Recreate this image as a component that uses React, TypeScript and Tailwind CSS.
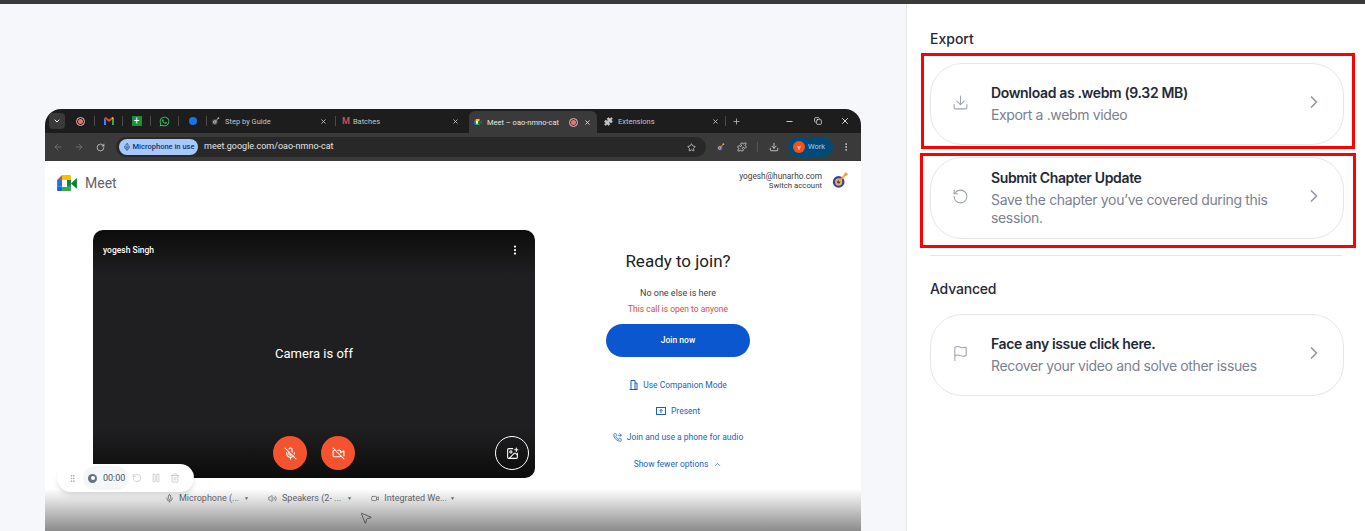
import React from "react";
import {
  ArrowLeft,
  ArrowRight,
  ChevronDown,
  ChevronRight,
  ChevronUp,
  Copy,
  Download,
  EllipsisVertical,
  Flag,
  GripVertical,
  ImagePlus,
  Mic,
  MicOff,
  Minus,
  MousePointer2,
  Pause,
  PhoneForwarded,
  Plus,
  Puzzle,
  RotateCcw,
  RotateCw,
  Star,
  Trash2,
  Video,
  VideoOff,
  Volume2,
  X,
} from "lucide-react";
import { FaWhatsapp } from "react-icons/fa";

function MeetLogo({ size = 20 }: { size?: number }) {
  return (
    <svg width={size} height={size * 0.84} viewBox="0 0 20 17">
      <path d="M0 5 L5 0 V5 Z" fill="#ea4335" />
      <path d="M5 0 H13 Q14 0 14 1 V5 H5 Z" fill="#fbbc04" />
      <path d="M0 5 H5 V12 H0 Z" fill="#1a73e8" />
      <path d="M0 12 H5 V17 H1.5 Q0 17 0 15.5 Z" fill="#1967d2" />
      <path d="M5 12 H14 V16 Q14 17 13 17 H5 Z" fill="#34a853" />
      <path d="M14 5 V12 H10 V5 Z" fill="#188038" />
      <path d="M14 8.5 L20 3 V14 Z" fill="#00832d" />
      <rect x="5" y="5" width="5" height="7" fill="#fff" />
    </svg>
  );
}

function TargetLogo({ size = 18 }: { size?: number }) {
  return (
    <svg width={size} height={size} viewBox="0 0 18 20">
      <circle cx="7.5" cy="11" r="6.5" fill="#3f3d9e" />
      <circle cx="7.5" cy="11" r="4" fill="#e7b54a" />
      <circle cx="7.5" cy="11" r="1.8" fill="#3f3d9e" />
      <path d="M8 10.5 L15 3" stroke="#e9a93c" strokeWidth="2" />
      <circle cx="15.5" cy="2.5" r="2" fill="#e9a93c" />
    </svg>
  );
}

function GmailIcon() {
  return (
    <svg width="10" height="8" viewBox="0 0 10 8">
      <path d="M0 1 V8 H2 V3 Z" fill="#4285f4" />
      <path d="M8 3 V8 H10 V1 Z" fill="#34a853" />
      <path d="M0 1 L5 5 L10 1 L8 0 L5 2.5 L2 0 Z" fill="#ea4335" />
      <path d="M8 0 L10 1 L8 3 Z" fill="#fbbc04" />
    </svg>
  );
}

function CompanionIcon() {
  return (
    <svg width="9" height="10" viewBox="0 0 9 10" fill="none" stroke="currentColor" strokeWidth="1">
      <path d="M2 9.5 V0.5 H6 V9.5" />
      <path d="M6 3 H8 V9.5" />
      <path d="M0.5 9.5 H8.5" />
    </svg>
  );
}

function PresentIcon() {
  return (
    <svg width="10" height="8" viewBox="0 0 10 8" fill="none" stroke="currentColor" strokeWidth="1">
      <rect x="0.5" y="0.5" width="9" height="7" />
      <path d="M5 6 V2.5 M3.5 4 L5 2.5 L6.5 4" />
    </svg>
  );
}

function RecDot() {
  return (
    <span className="flex h-[9px] w-[9px] items-center justify-center rounded-full border border-[#f2b8b5]">
      <span className="h-[5px] w-[5px] rounded-full bg-[#e2766e]" />
    </span>
  );
}

function Sep() {
  return <span className="h-[10px] w-px shrink-0 bg-[#4a4a4a]" />;
}

function PinnedTab({ children }: { children: React.ReactNode }) {
  return (
    <>
      <span className="flex w-[27px] shrink-0 items-center justify-center">{children}</span>
      <Sep />
    </>
  );
}

function BrowserTabs() {
  return (
    <div className="flex h-6 items-center bg-[#1d1d1d] pl-[4px] text-[7.5px] text-[#c4c4c4]">
      <span className="flex h-4 w-4 items-center justify-center rounded bg-[#3a3a3a]">
        <ChevronDown size={8} strokeWidth={3} className="text-white" />
      </span>
      <span className="w-[2px]" />
      <PinnedTab>
        <RecDot />
      </PinnedTab>
      <PinnedTab>
        <GmailIcon />
      </PinnedTab>
      <PinnedTab>
        <span className="flex h-[10px] w-[10px] items-center justify-center bg-[#1e8e3e] text-[10px] leading-none text-white">+</span>
      </PinnedTab>
      <PinnedTab>
        <FaWhatsapp size={11} className="text-[#25d366]" />
      </PinnedTab>
      <PinnedTab>
        <span className="h-2 w-2 rounded-full bg-[#1a73e8]" />
      </PinnedTab>
      <div className="flex w-[128px] items-center pl-[4px]">
        <span className="grayscale">
          <TargetLogo size={9} />
        </span>
        <span className="ml-[5px] flex-1 pt-px">Step by Guide</span>
        <X size={7} strokeWidth={3} className="mr-[8px]" />
      </div>
      <Sep />
      <div className="flex w-[133px] items-center pl-[6px]">
        <span className="text-[9px] font-bold leading-none text-[#d0475a]">M</span>
        <span className="ml-[3px] flex-1 pt-px">Batches</span>
        <X size={7} strokeWidth={3} className="mr-[10px]" />
      </div>
      <div className="flex h-[22px] w-[128px] items-center self-end rounded-t-md bg-[#3a3a3a] pl-[5px] text-[#e4e4e4]">
        <MeetLogo size={8} />
        <span className="ml-[5px] flex-1 pt-px">Meet – oao-nmno-cat</span>
        <RecDot />
        <X size={7} strokeWidth={3} className="ml-[6px] mr-[6px]" />
      </div>
      <div className="flex w-[128px] items-center pl-[7px]">
        <Puzzle size={9} fill="#c4c4c4" />
        <span className="ml-[5px] flex-1 pt-px">Extensions</span>
        <X size={7} strokeWidth={3} className="mr-[6px]" />
      </div>
      <Sep />
      <Plus size={9} className="ml-[6px]" />
      <Minus size={9} className="ml-[44px] text-white" />
      <Copy size={8} className="ml-[20px] text-white" />
      <X size={10} className="ml-[18px] text-white" />
    </div>
  );
}

function BrowserToolbar() {
  return (
    <div className="flex h-7 items-center bg-[#3a3a3a] pl-[8px] text-[#d8d8d8]">
      <ArrowLeft size={10} className="text-[#777]" />
      <ArrowRight size={10} className="ml-[11px] text-[#777]" />
      <RotateCw size={9} className="ml-[12px]" />
      <div className="ml-[11px] flex h-[20px] w-[590px] items-center rounded-full bg-[#282828] pl-[3px] pr-[10px]">
        <span className="flex h-[16px] w-[79px] items-center justify-center gap-[2px] rounded-full bg-[#a8c7fa] text-[7.5px] font-medium text-[#0b3a6e]">
          <Mic size={8} />
          Microphone in use
        </span>
        <span className="ml-[6px] flex-1 text-[9px] text-[#e4e4e4]">meet.google.com/oao-nmno-cat</span>
        <Star size={9} />
      </div>
      <span className="ml-[10px]">
        <TargetLogo size={9} />
      </span>
      <Puzzle size={10} className="ml-[12px]" />
      <span className="ml-[10px] h-[10px] w-px bg-[#555]" />
      <Download size={10} className="ml-[11px]" />
      <span className="ml-[9px] flex h-[20px] w-[45px] items-center rounded-full bg-[#004a77] pl-[5px]">
        <span className="flex h-[12px] w-[12px] items-center justify-center rounded-full bg-[#f4511e] text-[6px] text-white">Y</span>
        <span className="ml-[3px] text-[7.5px] text-[#a8c7fa]">Work</span>
      </span>
      <EllipsisVertical size={10} className="ml-[8px]" />
    </div>
  );
}

function JoinLink({ children }: { children: React.ReactNode }) {
  return (
    <div className="flex h-[26.3px] items-center justify-center gap-[5px] text-[8.5px] text-[#1a5fc8]">
      {children}
    </div>
  );
}

function DeviceItem({ icon, label }: { icon: React.ReactNode; label: string }) {
  return (
    <div className="flex w-[84px] items-center gap-[3px] whitespace-nowrap text-[9px] text-[#5f6368]">
      {icon}
      <span className="ml-[2px] flex-1">{label}</span>
      <span className="text-[5px]">▼</span>
    </div>
  );
}

function MeetPage() {
  return (
    <div className="relative flex-1 overflow-hidden bg-white">
      <div className="flex h-[69px] items-start justify-between pl-[12px] pr-[12px] pt-[10px]">
        <div className="flex items-center gap-[8px] pt-[3px]">
          <MeetLogo size={20} />
          <span className="text-[14px] leading-[18px] text-[#5f6368]">Meet</span>
        </div>
        <div className="flex items-center gap-[9px]">
          <div className="text-right text-[7.8px] leading-[10px] text-[#3c4043]">
            <div className="text-[8.3px]">yogesh@hunarho.com</div>
            <div>Switch account</div>
          </div>
          <TargetLogo size={18} />
        </div>
      </div>

      <div className="flex pl-[48px] pr-[40px]">
        <div className="flex h-[248px] w-[442px] flex-col justify-between rounded-[10px] bg-[linear-gradient(#0c0c0c_0%,#1f1f21_18%,#1f1f21_80%,#0c0c0c_100%)] px-[10px] pb-[8px] pt-[14px] text-white">
          <div className="flex items-center justify-between text-[8.5px] font-medium">
            <span>yogesh Singh</span>
            <EllipsisVertical size={12} strokeWidth={2.5} className="mr-[4px]" />
          </div>
          <div className="mt-[14px] text-center text-[13px]">Camera is off</div>
          <div className="relative flex items-center justify-center gap-[14px]">
            <span className="flex h-[34px] w-[34px] items-center justify-center rounded-full bg-[#f4532f]">
              <MicOff size={13} />
            </span>
            <span className="flex h-[34px] w-[34px] items-center justify-center rounded-full bg-[#f4532f]">
              <VideoOff size={13} />
            </span>
            <span className="absolute right-[-4px] flex h-[34px] w-[34px] items-center justify-center rounded-full border border-white">
              <ImagePlus size={13} />
            </span>
          </div>
        </div>

        <div className="flex flex-1 flex-col items-center pt-[20px]">
          <div className="text-[17px] leading-[22px] text-[#202124]">Ready to join?</div>
          <div className="mt-[16px] text-[9px] leading-[10px] text-[#3c4043]">No one else is here</div>
          <div className="mt-[6px] text-[8.5px] leading-[10px] text-[#e0483c]">This call is open to anyone</div>
          <div className="mt-[10px] flex h-[33px] w-[144px] items-center justify-center rounded-full bg-[#0b57d0] text-[8.5px] font-medium text-white">
            Join now
          </div>
          <div className="mt-[15px] w-full">
            <JoinLink>
              <CompanionIcon />
              Use Companion Mode
            </JoinLink>
            <JoinLink>
              <PresentIcon />
              Present
            </JoinLink>
            <JoinLink>
              <PhoneForwarded size={9} />
              Join and use a phone for audio
            </JoinLink>
            <JoinLink>
              Show fewer options
              <ChevronUp size={9} />
            </JoinLink>
          </div>
        </div>
      </div>

      <div className="absolute bottom-0 left-0 right-0 h-[42px] bg-[linear-gradient(transparent,#8b8b8b)]" />
      <div className="relative ml-[120px] mt-[14px] flex gap-[19px]">
        <DeviceItem icon={<Mic size={9} />} label="Microphone (..." />
        <DeviceItem icon={<Volume2 size={9} />} label="Speakers (2- ..." />
        <DeviceItem icon={<Video size={9} />} label="Integrated We..." />
      </div>
      {/* captured mouse pointer */}
      <MousePointer2 size={14} strokeWidth={1.2} className="absolute left-[314px] top-[350px] text-[#333]" />
    </div>
  );
}

function RecorderBar() {
  return (
    <div className="absolute left-[57px] top-[460px] flex h-[28px] w-[137px] items-center rounded-full bg-white pl-[11px] font-['Roboto',sans-serif] shadow-md">
      <GripVertical size={9} className="text-[#9ca3af]" />
      <div className="ml-[6px] flex h-[24px] items-center gap-[6px] rounded-full bg-[#f5f6f8] pl-[5px] pr-[4px]">
        <span className="flex h-[9px] w-[9px] items-center justify-center rounded-full bg-[#6b7280]">
          <span className="h-[4px] w-[4px] rounded-full bg-white" />
        </span>
        <span className="pt-px text-[9px] text-[#4b5563]">00:00</span>
      </div>
      <RotateCcw size={10} className="ml-[3px] text-[#c4c8ce]" />
      <Pause size={10} className="ml-[9px] text-[#c4c8ce]" />
      <Trash2 size={10} className="ml-[9px] text-[#c4c8ce]" />
    </div>
  );
}

function ActionCard({
  icon,
  title,
  desc,
  frame,
}: {
  icon: React.ReactNode;
  title: string;
  desc: string;
  frame?: string;
}) {
  return (
    <div className="relative">
      <div className="flex h-[82px] items-center rounded-[32px] border border-[#e5e7eb] bg-white pl-[21px] pr-[19px]">
        <span className="mb-[4px] w-[39px] shrink-0 text-[#9ca3af]">{icon}</span>
        <div className="flex-1 tracking-[-0.35px]">
          <div className="text-[14px] font-semibold leading-[18px] text-[#1f2937]">{title}</div>
          <div className="mt-[4px] text-[14px] leading-[18px] text-[#7b8190]">{desc}</div>
        </div>
        <ChevronRight size={20} className="mb-[4px] ml-[8px] text-[#9197a3]" />
      </div>
      {frame && <div className={frame} />}
    </div>
  );
}

export default function App() {
  return (
    <div className="flex h-screen flex-col overflow-hidden bg-white font-['Inter',sans-serif]">
      <div className="h-[4px] shrink-0 bg-[#3a3a3a]" />
      <div className="flex flex-1 overflow-hidden">
        <div className="relative w-[906px] shrink-0 bg-[#f5f7fb] pl-[45px] pt-[105px]">
          <div className="flex h-[422px] w-[816px] flex-col overflow-hidden rounded-t-[16px] font-['Roboto',sans-serif]">
            <BrowserTabs />
            <BrowserToolbar />
            <MeetPage />
          </div>
          <RecorderBar />
        </div>

        <div className="flex-1 border-l border-[#e5e7eb] pl-[23px] pr-[21px] pt-[26px]">
          <h2 className="text-[14px] font-medium leading-[18px] text-[#1f2937]">Export</h2>
          <div className="mt-[15px] flex flex-col gap-[12px]">
            <ActionCard
              icon={<Download size={17} strokeWidth={1.5} />}
              title="Download as .webm (9.32 MB)"
              desc="Export a .webm video"
              frame="absolute -bottom-[4px] -left-[9px] -right-[11px] -top-[10px] border-[3px] border-[#ff0000]"
            />
            <ActionCard
              icon={<RotateCcw size={17} strokeWidth={1.5} />}
              title="Submit Chapter Update"
              desc="Save the chapter you’ve covered during this session."
              frame="absolute -bottom-[9px] -left-[10px] -right-[12px] -top-[4px] border-[3px] border-[#ff0000]"
            />
          </div>
          <div className="mr-[2px] mt-[16px] h-px bg-[#e5e7eb]" />
          <h2 className="mt-[24px] text-[14px] font-medium leading-[18px] tracking-[-0.2px] text-[#1f2937]">Advanced</h2>
          <div className="mt-[16px]">
            <ActionCard
              icon={<Flag size={17} strokeWidth={1.5} />}
              title="Face any issue click here."
              desc="Recover your video and solve other issues"
            />
          </div>
        </div>
      </div>
    </div>
  );
}
